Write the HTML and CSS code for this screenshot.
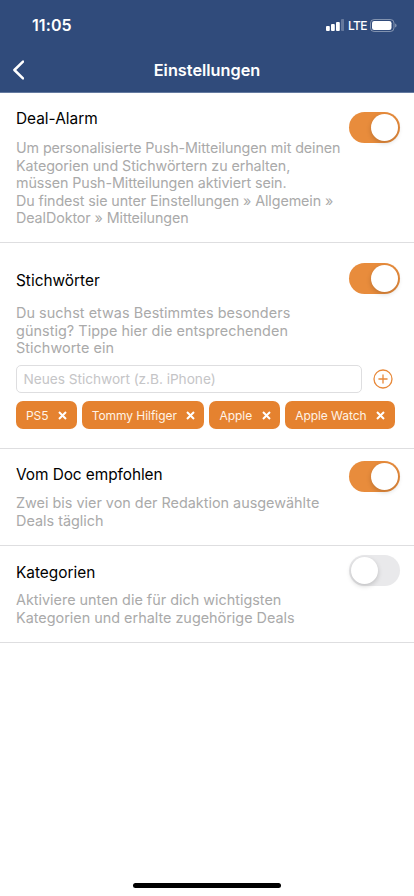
FILE: index.html
```html
<!DOCTYPE html>
<html lang="de">
<head>
<meta charset="utf-8">
<meta name="viewport" content="width=device-width, initial-scale=1">
<title>Einstellungen</title>
<link rel="stylesheet" href="styles.css">
</head>
<body>
<div class="screen">
  <header class="header">
    <div class="status">
      <span class="time">11:05</span>
      <div class="status-icons">
        <svg class="signal" width="18" height="12" viewBox="0 0 18 12" fill="#fff"><rect x="0" y="7" width="3.8" height="5" rx="1"/><rect x="5" y="5" width="3.8" height="7" rx="1"/><rect x="10" y="3" width="3.8" height="9" rx="1"/><rect x="15" y="0" width="3.2" height="12" rx="1" opacity=".25"/></svg>
        <span class="lte">LTE</span>
        <svg class="battery" width="27" height="13" viewBox="0 0 27 13"><rect x=".5" y=".5" width="23.5" height="12" rx="3.6" fill="none" stroke="#fff" stroke-opacity=".4"/><rect x="2" y="2" width="19.5" height="9" rx="2.2" fill="#fff"/><path d="M25.2 4.5c1.8.6 1.8 3.4 0 4z" fill="#fff" opacity=".45"/></svg>
      </div>
    </div>
    <div class="nav">
      <svg class="back" width="12" height="20" viewBox="0 0 12 20" fill="none" stroke="#fff" stroke-width="2.5" stroke-linecap="round" stroke-linejoin="round"><path d="M11 1.6 2.4 10l8.6 8.4"/></svg>
      <h1 class="nav-title">Einstellungen</h1>
    </div>
  </header>
  <main>
    <section class="section alarm">
      <div class="copy">
        <h2>Deal-Alarm</h2>
        <p>Um personalisierte Push-Mitteilungen mit deinen<br>Kategorien und Stichwörtern zu erhalten,<br>müssen Push-Mitteilungen aktiviert sein.<br>Du findest sie unter Einstellungen » Allgemein »<br>DealDoktor » Mitteilungen</p>
      </div>
      <div class="toggle on"><span class="knob"></span></div>
    </section>
    <section class="section keywords">
      <div class="copy">
        <h2>Stichwörter</h2>
        <p>Du suchst etwas Bestimmtes besonders<br>günstig? Tippe hier die entsprechenden<br>Stichworte ein</p>
      </div>
      <div class="toggle on"><span class="knob"></span></div>
      <div class="entry">
        <div class="field">Neues Stichwort (z.B. iPhone)</div>
        <svg width="20" height="20" viewBox="0 0 20 20" fill="none" stroke="#e8893a" stroke-width="1.3" stroke-linecap="round"><circle cx="10" cy="10" r="9"/><path d="M10 5.9v8.2M5.9 10h8.2"/></svg>
      </div>
      <div class="chips">
        <div class="chip ps"><span>PS5</span><svg class="x" viewBox="0 0 9 9"><path d="m1 1 7 7M8 1 1 8"/></svg></div>
        <div class="chip tommy"><span>Tommy Hilfiger</span><svg class="x" viewBox="0 0 9 9"><path d="m1 1 7 7M8 1 1 8"/></svg></div>
        <div class="chip apple"><span>Apple</span><svg class="x" viewBox="0 0 9 9"><path d="m1 1 7 7M8 1 1 8"/></svg></div>
        <div class="chip watch"><span>Apple Watch</span><svg class="x" viewBox="0 0 9 9"><path d="m1 1 7 7M8 1 1 8"/></svg></div>
      </div>
    </section>
    <section class="section doc">
      <div class="copy">
        <h2>Vom Doc empfohlen</h2>
        <p>Zwei bis vier von der Redaktion ausgewählte<br>Deals täglich</p>
      </div>
      <div class="toggle on"><span class="knob"></span></div>
    </section>
    <section class="section categories">
      <div class="copy">
        <h2>Kategorien</h2>
        <p>Aktiviere unten die für dich wichtigsten<br>Kategorien und erhalte zugehörige Deals</p>
      </div>
      <div class="toggle"><span class="knob"></span></div>
    </section>
  </main>
  <div class="home"></div>
</div>
</body>
</html>
```

FILE: styles.css
```css
* { box-sizing: border-box; }
body { margin: 0; background: #fff; font-family: Inter, "Liberation Sans", sans-serif; }
h1, h2, p { margin: 0; font-weight: 400; }
svg { display: block; flex: none; }
.screen { height: 896px; display: flex; flex-direction: column; overflow: hidden; }
.header { height: 93px; flex: none; background: #304b7b; color: #fff; border-bottom: 1px solid #647aa0; }
.status { height: 50px; padding: 0 17px 0 32px; display: flex; justify-content: space-between; align-items: center; }
.time { font-size: 16px; font-weight: 600; letter-spacing: .1px; }
.status-icons { display: flex; align-items: center; }
.signal { margin-right: 4px; }
.lte { font-size: 12px; font-weight: 500; line-height: 14px; width: 22px; letter-spacing: -.65px; padding-top: 1px; }
.nav { height: 40px; padding: 0 12px; display: grid; grid-template-columns: 24px 1fr 24px; align-items: center; }
.nav-title { font-size: 16.3px; font-weight: 600; text-align: center; line-height: 20px; }
.section { display: grid; grid-template-columns: 1fr 51px; align-content: start; padding: 0 14px 0 16px; border-bottom: 1px solid #dedee0; }
.copy { white-space: nowrap; min-width: 0; }
h2 { font-size: 15.4px; line-height: 20px; color: #000; }
p { font-size: 14.4px; line-height: 17.5px; color: #aaa; }
.alarm { height: 150px; padding-top: 16px; }
.alarm p { margin-top: 10px; font-size: 14.3px; letter-spacing: -.09px; }
.alarm .toggle { margin-top: 3px; }
.keywords { height: 206px; padding-top: 20px; }
.keywords h2 { margin-top: 8px; }
.keywords p { margin-top: 13px; letter-spacing: .05px; }
.doc { height: 97px; padding-top: 12px; }
.doc h2 { margin-top: 4px; letter-spacing: -.06px; }
.doc p { margin-top: 9px; }
.categories { height: 97px; padding-top: 9px; }
.categories h2 { margin-top: 8px; }
.categories p { margin-top: 8px; }
.toggle { width: 51px; height: 31px; border-radius: 16px; background: #e9e9eb; padding: 2px; display: flex; }
.toggle.on { background: #e88c3c; justify-content: flex-end; }
.knob { width: 27px; height: 27px; border-radius: 50%; background: #fff; box-shadow: 0 2px 5px rgba(0,0,0,.18); }
.entry { grid-column: 1 / -1; display: flex; align-items: center; gap: 11px; margin-top: 8.5px; }
.field { width: 346px; height: 28px; border: 1px solid #dedee0; border-radius: 5px; padding: 0 6.5px; font-size: 13.7px; line-height: 26px; color: #c5c5c7; letter-spacing: -.04px; }
.chips { grid-column: 1 / -1; display: flex; gap: 5px; margin-top: 8px; }
.chip { height: 28px; border-radius: 7px; background: #e5822f; color: #fff3e6; padding: 0 9.5px 0 10px; display: flex; align-items: center; justify-content: space-between; font-size: 12px; letter-spacing: -.05px; white-space: nowrap; }
.ps { width: 60.7px; }
.tommy { width: 122.8px; }
.apple { width: 70.7px; }
.watch { width: 109.8px; }
.x { width: 9px; height: 9px; fill: none; stroke: #fff; stroke-width: 2; }
.home { width: 148px; height: 5px; border-radius: 3px; background: #000; margin: auto auto 8.5px; }
```
